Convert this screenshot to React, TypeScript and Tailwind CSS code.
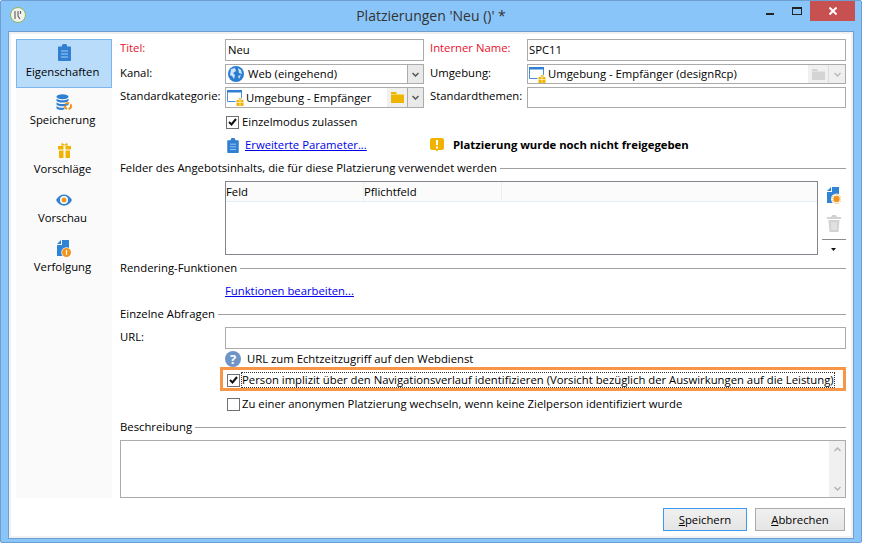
import type { ReactNode } from "react";

const font = "font-['Open_Sans','Liberation_Sans',Arial,sans-serif]";
const text = "text-[11.3px] leading-[14px]";

function Clipboard({ className = "w-[13px] h-[17px]" }: { className?: string }) {
  return (
    <svg viewBox="0 0 13 17" className={className}>
      <path d="M4 2.500V1.200L5 0h3l1 1.200v1.300h3.200c.5 0 .8.3.8.8v12.900c0 .5-.3.8-.8.8H.8c-.5 0-.8-.3-.8-.8V3.300c0-.5.3-.8.8-.8z" fill="#2f7fd3" />
      <path d="M3 7h7M3 10h7M3 13h7" stroke="#a8cdf2" strokeWidth="1" />
    </svg>
  );
}

function Database() {
  return (
    <svg viewBox="0 0 16 16" className="w-[16px] h-[16px]">
      <ellipse cx="6.500" cy="2.800" rx="6" ry="2.500" fill="#2f7fd3" />
      <path d="M.5 4.500c1 2.400 11 2.400 12 0v2.200c-1 2.400-11 2.400-12 0zM.5 8.200c1 2.400 11 2.400 12 0v2.200c-1 2.400-11 2.400-12 0zM.5 11.800c1 2.400 7 2.400 8 1.500v2c-2 1-7 .8-8-1z" fill="#2f7fd3" />
      <circle cx="12" cy="12" r="3" fill="none" stroke="#f0941d" strokeWidth="2" strokeDasharray="4 1.500" />
    </svg>
  );
}

function Gift() {
  return (
    <svg viewBox="0 0 13 17" className="w-[13px] h-[17px]">
      <path d="M3 3.500 4 .8l2.500 2 2.500-2 1 2.700z" fill="#f0b400" />
      <path d="M0 4h5.500v3.500H0zM7.500 4H13v3.500H7.500zM1 8.500h4.500V16H1zM7.500 8.500H12V16H7.500z" fill="#f0b400" />
    </svg>
  );
}

function Eye() {
  return (
    <svg viewBox="0 0 16 12" className="w-[16px] h-[12px]">
      <path d="M0 6c3.500-7.500 12.500-7.500 16 0-3.500 7.500-12.500 7.500-16 0z" fill="#2f84d6" />
      <circle cx="8" cy="6" r="4" fill="#fff" />
      <circle cx="8" cy="6" r="2.500" fill="#f0941d" />
    </svg>
  );
}

function Doc({ badge }: { badge: "info" | "sun" }) {
  return (
    <svg viewBox="0 0 14 17" className="w-[14px] h-[17px]">
      <path d="M5 0h7v16H0V5h5z" fill="#2f84d6" />
      <path d="M0 4l4-4v4z" fill="#2f84d6" />
      {badge === "info" ? (
        <>
          <circle cx="9.500" cy="12.500" r="5.200" fill="#fff" />
          <circle cx="9.500" cy="12.500" r="4.500" fill="#f0941d" />
          <path d="M9.500 10v5" stroke="#fff" strokeWidth="1.200" />
        </>
      ) : (
        <>
          <circle cx="9.500" cy="12" r="5.500" fill="#fff" />
          <circle cx="9.500" cy="12" r="3.200" fill="#f0941d" />
          <circle cx="9.500" cy="12" r="4.500" fill="none" stroke="#f0941d" strokeWidth="1" strokeDasharray="1 1.300" />
        </>
      )}
    </svg>
  );
}

function EnvIcon() {
  return (
    <svg viewBox="0 0 17 17" className="w-[17px] h-[17px] shrink-0">
      <path d="M.5 1.500h14v10" fill="none" stroke="#4a90d9" strokeWidth="1" />
      <path d="M.5 1.500v11h8" fill="none" stroke="#4a90d9" strokeWidth="1" />
      <path d="M0 1h15v2.500H0z" fill="#2f7fd3" />
      <path d="M9.500 11h7v6h-7z" fill="#f0b400" />
      <path d="M11.500 9h3v2h-3zM13 11v6M9.500 13.500h7" fill="#f0b400" stroke="#fff" strokeWidth=".6" />
    </svg>
  );
}

function Folder({ muted = false }: { muted?: boolean }) {
  return (
    <svg viewBox="0 0 13 11" className="w-[13px] h-[11px]">
      <path d="M0 0h5l1 2h7v9H0z" fill={muted ? "#d4d4d4" : "#ecb500"} />
      <path d="M0 2h13v1H0z" fill={muted ? "#e2e2e2" : "#f6d76a"} />
    </svg>
  );
}

function Chevron({ color = "#555", up = false }: { color?: string; up?: boolean }) {
  return (
    <svg viewBox="0 0 7 5" className="w-[7px] h-[5px]">
      <path d={up ? "M.5 4 3.500 1l3 3" : "M.5 1l3 3 3-3"} fill="none" stroke={color} strokeWidth="1.500" />
    </svg>
  );
}

function Check({ checked }: { checked: boolean }) {
  return (
    <span className="w-[13px] h-[13px] border border-[#707070] bg-white flex items-center justify-center shrink-0">
      {checked && (
        <svg viewBox="0 0 9 8" className="w-[9px] h-[8px]">
          <path d="M1 4l2.500 2.500L8 1" fill="none" stroke="#111" strokeWidth="2" />
        </svg>
      )}
    </span>
  );
}

function NavItem({ icon, label, active }: { icon: ReactNode; label: string; active?: boolean }) {
  return (
    <div
      className={`h-[49px] flex flex-col items-center pt-[3px] border ${
        active ? "bg-[#b9dcfb] border-[#7db6ec]" : "border-transparent"
      }`}
    >
      <div className="h-[19px] flex items-center justify-center">{icon}</div>
      <div className={`${active ? "mt-[3px]" : "mt-[2px]"} mr-[3px] ${text} text-black`}>{label}</div>
    </div>
  );
}

function Section({ title }: { title: string }) {
  return (
    <div className="flex items-center gap-[3px] h-[14px]">
      <span className={`${text} text-black whitespace-nowrap`}>{title}</span>
      <div className="flex-1 h-px bg-[#a0a0a0]" />
    </div>
  );
}

function Label({ children, red }: { children: ReactNode; red?: boolean }) {
  return <div className={`${text} pt-[2px] whitespace-nowrap ${red ? "text-[#e8102a]" : "text-black"}`}>{children}</div>;
}

const field = `border border-[#ababab] bg-white ${text} text-black flex items-center`;

export default function App() {
  return (
    <div className={`w-[882px] h-[560px] bg-white overflow-hidden ${font}`}>
      <div className="w-[862px] h-[543px] bg-[#8ac5fa] border border-[#6f9fd0] rounded-[2px] flex flex-col">
        {/* title bar */}
        <div className="h-[30px] flex items-start shrink-0">
          <div className="w-[100px] pl-[9px] pt-[6px]">
            <div className="w-[16px] h-[16px] rounded-full bg-[#f3f3ee] border border-[#8cb45a] flex items-center justify-center">
              <svg viewBox="0 0 8 10" className="w-[8px] h-[10px]">
                <path d="M1 1v8M4 1v5l2 3M6.500 1v3" fill="none" stroke="#666" strokeWidth="1.200" />
              </svg>
            </div>
          </div>
          <div className="flex-1 text-center text-[14px] leading-[29px] text-[#333]">Platzierungen 'Neu ()' *</div>
          <div className="w-[100px] flex justify-end items-start pr-[6px]">
            <div className="w-[8px] h-[2px] bg-[#222] mt-[12px] mr-[18px]" />
            <div className="w-[10px] h-[8px] border border-t-2 border-[#222] mt-[6px] mr-[8px]" />
            <div className="w-[45px] h-[20px] bg-[#c75050] flex items-center justify-center">
              <svg viewBox="0 0 8 8" className="w-[8px] h-[8px]">
                <path d="M.5.500l7 7M7.500.500l-7 7" stroke="#fff" strokeWidth="2" />
              </svg>
            </div>
          </div>
        </div>

        {/* body */}
        <div className="flex-1 mx-[7px] mb-[6px] border border-[#6f9fd0]">
          <div className="h-full border-2 border-[#f0f0f0] bg-white p-[5px] flex flex-col">
            <div className="flex gap-[8px]">
              {/* sidebar */}
              <div className="w-[96px] h-[459px] bg-[#fafafa] shrink-0">
                <NavItem active icon={<Clipboard />} label="Eigenschaften" />
                <NavItem icon={<Database />} label="Speicherung" />
                <NavItem icon={<Gift />} label="Vorschläge" />
                <NavItem icon={<Eye />} label="Vorschau" />
                <NavItem icon={<Doc badge="info" />} label="Verfolgung" />
              </div>

              {/* form */}
              <div className="w-[726px]">
                <div className="grid grid-cols-[105px_199px_103px_319px] grid-rows-[22px_20px_21px] gap-y-[3px]">
                  <Label red>Titel:</Label>
                  <div className={`${field} px-[2px]`}>Neu</div>
                  <div className="pl-[6px]"><Label red>Interner Name:</Label></div>
                  <div className={`${field} px-[1px]`}>SPC11</div>

                  <Label>Kanal:</Label>
                  <div className={field}>
                    <svg viewBox="0 0 16 16" className="w-[16px] h-[16px] ml-[2px] shrink-0">
                      <circle cx="8" cy="8" r="8" fill="#2a7dd0" />
                      <path d="M3 3l4-1 1 3-3 2 2 2-1 4-2-3-2-1zM10 2l3 2 1 4-3-1zM10 10l3-1-2 4z" fill="#cfe4f8" />
                    </svg>
                    <span className="ml-[4px] flex-1">Web (eingehend)</span>
                    <div className="w-[16px] h-full bg-[#e9e9e9] border-l border-[#ababab] flex items-center justify-center">
                      <Chevron />
                    </div>
                  </div>
                  <div className="pl-[6px]"><Label>Umgebung:</Label></div>
                  <div className={field}>
                    <div className="ml-[1px]"><EnvIcon /></div>
                    <span className="ml-[2px] flex-1">Umgebung - Empfänger (designRcp)</span>
                    <div className="w-[20px] h-full bg-[#f0f0f0] flex items-center justify-center"><Folder muted /></div>
                    <div className="w-[17px] h-full bg-[#efefef] border-l border-[#dcdcdc] flex items-center justify-center">
                      <Chevron color="#bbb" />
                    </div>
                  </div>

                  <Label>Standardkategorie:</Label>
                  <div className={field}>
                    <div className="ml-[1px]"><EnvIcon /></div>
                    <span className="ml-[2px] flex-1">Umgebung - Empfänger</span>
                    <div className="w-[20px] h-full bg-[#f0f0f0] flex items-center justify-center"><Folder /></div>
                    <div className="w-[16px] h-full bg-[#e9e9e9] border-l border-[#ababab] flex items-center justify-center">
                      <Chevron />
                    </div>
                  </div>
                  <div className="pl-[6px]"><Label>Standardthemen:</Label></div>
                  <div className={field} />
                </div>

                <div className={`mt-[7px] ml-[106px] flex items-center gap-[3px] h-[14px] ${text}`}>
                  <Check checked />
                  <span>Einzelmodus zulassen</span>
                </div>

                <div className="mt-[8px] flex items-center h-[16px]">
                  <div className="ml-[107px] w-[13px] flex">
                    <Clipboard className="w-[12px] h-[15px]" />
                  </div>
                  <a className={`ml-[5px] w-[185px] ${text} text-[#0000ee] underline`}>Erweiterte Parameter...</a>
                  <svg viewBox="0 0 14 14" className="w-[14px] h-[14px]">
                    <path d="M2 0h10c1 0 2 1 2 2v8c0 1-1 2-2 2H8l-1 2-1-2H2c-1 0-2-1-2-2V2c0-1 1-2 2-2z" fill="#f0b400" />
                    <path d="M6 2h2v5H6zM6 8.500h2v2H6z" fill="#fff" />
                  </svg>
                  <span className={`ml-[9px] ${text} font-bold`}>Platzierung wurde noch nicht freigegeben</span>
                </div>

                <div className="mt-[8px]">
                  <Section title="Felder des Angebotsinhalts, die für diese Platzierung verwendet werden" />
                </div>

                {/* table + tools */}
                <div className="mt-[6px] flex">
                  <div className="ml-[105px] w-[593px] h-[74px] border border-[#82858c] bg-white">
                    <div className={`h-[20px] bg-[#fbfbfb] border-b border-[#e5edf8] flex ${text}`}>
                      <div className="w-[138px] leading-[20px] border-r border-[#eeeeee]">Feld</div>
                      <div className="w-[138px] leading-[20px] border-r border-[#eeeeee]">Pflichtfeld</div>
                    </div>
                  </div>
                  <div className="w-[28px] flex flex-col items-center pl-[3px]">
                    <div className="mt-[6px]"><Doc badge="sun" /></div>
                    <svg viewBox="0 0 14 17" className="w-[14px] h-[17px] mt-[11px]">
                      <path d="M5 0h4l1 2h4v2H0V2h4zM1.500 5h11l-1 12h-9z" fill="#d2d2d2" />
                      <path d="M5 7v8M7 7v8M9 7v8" stroke="#eee" strokeWidth="1" />
                    </svg>
                    <div className="w-[24px] h-px bg-[#8a8a8a] mt-[7px]" />
                    <svg viewBox="0 0 5 3" className="w-[5px] h-[3px] mt-[8px]"><path d="M0 0h5L2.500 3z" fill="#111" /></svg>
                  </div>
                </div>

                <div className="mt-[6px]"><Section title="Rendering-Funktionen" /></div>
                <a className={`block mt-[9px] ml-[105px] ${text} text-[#0000ee] underline`}>Funktionen bearbeiten...</a>
                <div className="mt-[9px]"><Section title="Einzelne Abfragen" /></div>

                <div className="mt-[6px] flex h-[22px]">
                  <div className={`w-[105px] ${text} pt-[3px]`}>URL:</div>
                  <div className={`${field} flex-1`} />
                </div>

                <div className={`mt-[2px] ml-[105px] flex items-center h-[16px] ${text}`}>
                  <span className="w-[16px] h-[16px] rounded-full bg-[#6f95c8] text-white text-[13px] leading-[16px] font-bold text-center">?</span>
                  <span className="ml-[6px]">URL zum Echtzeitzugriff auf den Webdienst</span>
                </div>

                <div className={`ml-[100px] h-[24px] border-[3px] border-[#f79646] flex items-center pl-[4px] pt-[2px] ${text}`}>
                  <Check checked />
                  <span className="ml-[2px] outline-1 outline-dotted outline-[#333] whitespace-nowrap">
                    Person implizit über den Navigationsverlauf identifizieren (Vorsicht bezüglich der Auswirkungen auf die Leistung)
                  </span>
                </div>

                <div className={`mt-[6px] ml-[107px] flex items-center gap-[2px] h-[14px] ${text}`}>
                  <Check checked={false} />
                  <span>Zu einer anonymen Platzierung wechseln, wenn keine Zielperson identifiziert wurde</span>
                </div>

                <div className="mt-[9px]"><Section title="Beschreibung" /></div>

                <div className="mt-[6px] h-[58px] border border-[#ababab] bg-white flex justify-end">
                  <div className="w-[16px] h-full bg-[#f0f0f0] flex flex-col items-center justify-between py-[6px]">
                    <Chevron color="#b5b5b5" up />
                    <Chevron color="#b5b5b5" />
                  </div>
                </div>
              </div>
            </div>

            {/* buttons */}
            <div className={`mt-[10px] pr-[1px] flex justify-end gap-[8px] ${text}`}>
              <button className="w-[84px] h-[23px] border border-[#3c9bf0] bg-gradient-to-b from-[#f0f0f0] to-[#e5e5e5]">
                <u>S</u>peichern
              </button>
              <button className="w-[90px] h-[23px] border border-[#acacac] bg-gradient-to-b from-[#f0f0f0] to-[#e5e5e5]">
                <u>A</u>bbrechen
              </button>
            </div>
          </div>
        </div>
      </div>
    </div>
  );
}
